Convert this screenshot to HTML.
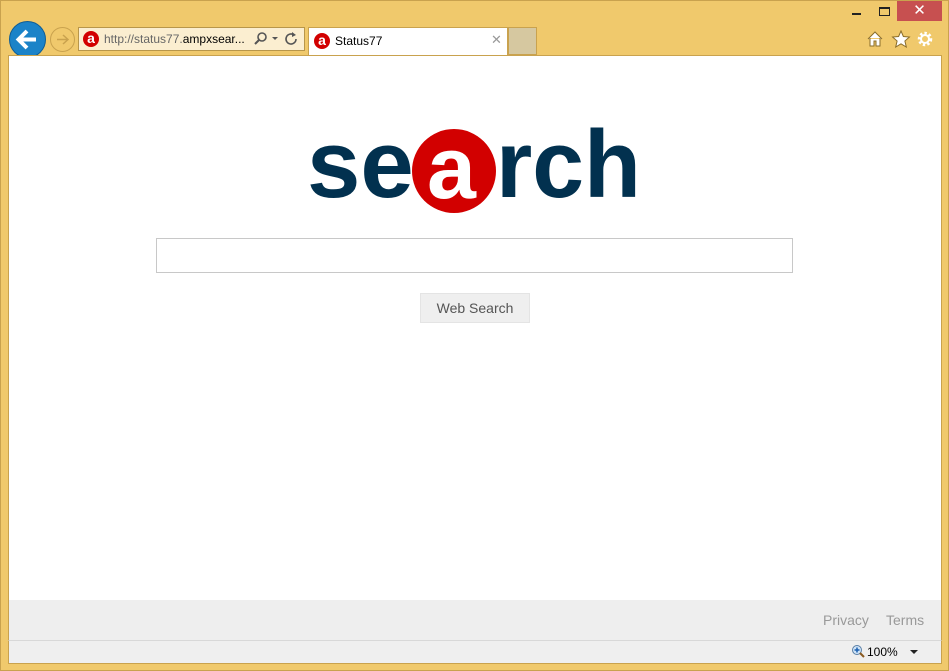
<!DOCTYPE html>
<html><head><meta charset="utf-8"><style>
*{margin:0;padding:0;box-sizing:border-box}
body{width:949px;height:671px;background:#f0c96c;position:relative;overflow:hidden;font-family:"Liberation Sans",Arial,sans-serif}
.abs{position:absolute}
.lg{position:absolute;top:100px;font:bold 96px/130px 'Liberation Sans',sans-serif;color:#02314f;white-space:nowrap}
</style></head><body>
<div class="abs" style="left:0;top:0;width:949px;height:671px;border:1px solid #c9a24e"></div>
<!-- window controls -->
<div class="abs" style="left:852px;top:13px;width:9px;height:2px;background:#222"></div>
<div class="abs" style="left:879px;top:7px;width:11px;height:9px;border:1px solid #222;border-top-width:2px"></div>
<div class="abs" style="left:897px;top:1px;width:45px;height:20px;background:#c75050;color:#fff;font-size:15px;text-align:center;line-height:20px">✕</div>
<!-- nav buttons -->
<div class="abs" style="left:9px;top:21px;width:37px;height:37px;border-radius:50%;background:#1b83c8;border:1px solid #0f5d95"></div>
<svg class="abs" style="left:9px;top:21px" width="37" height="37"><path d="M10 18.5h17M18 10l-8.5 8.5L18 27" stroke="#fff" stroke-width="4" fill="none"/></svg>
<div class="abs" style="left:50px;top:27px;width:25px;height:25px;border-radius:50%;border:1px solid #c9a24e"></div>
<svg class="abs" style="left:50px;top:27px" width="25" height="25"><path d="M7 12.5h11M13 8l5 4.5-5 4.5" stroke="#c9a24e" stroke-width="1.5" fill="none"/></svg>
<!-- address bar -->
<div class="abs" style="left:78px;top:27px;width:227px;height:24px;background:#fbeed0;border:1px solid #b8964a"></div>
<div class="abs" style="left:83px;top:31px;width:16px;height:16px;border-radius:50%;background:#d20000;color:#fff;font:bold 14px/14px 'Liberation Sans';text-align:center">a</div>
<div class="abs" style="left:104px;top:32px;font-size:12px;color:#666">http://status77.<span style="color:#000">ampxsear...</span></div>
<svg class="abs" style="left:253px;top:31px" width="50" height="16"><circle cx="9" cy="6" r="4" stroke="#555" stroke-width="1.6" fill="none"/><path d="M6 9l-4 4" stroke="#555" stroke-width="2"/><path d="M19 6h6l-3 3z" fill="#555"/><path d="M41 4a5 5 0 1 0 2 4" stroke="#555" stroke-width="1.6" fill="none"/><path d="M39 1l4 3-4 2z" fill="#555"/></svg>
<!-- tab -->
<div class="abs" style="left:308px;top:27px;width:200px;height:28px;background:#fff;border:1px solid #c9a24e;border-bottom:none"></div>
<div class="abs" style="left:314px;top:33px;width:16px;height:16px;border-radius:50%;background:#d20000;color:#fff;font:bold 14px/14px 'Liberation Sans';text-align:center">a</div>
<div class="abs" style="left:335px;top:34px;font-size:12px;color:#000">Status77</div>
<div class="abs" style="left:491px;top:32px;font-size:13px;color:#999">✕</div>
<div class="abs" style="left:508px;top:27px;width:29px;height:28px;background:#d6c8a0;border:1px solid #c9a24e"></div>
<!-- right icons -->
<svg class="abs" style="left:866px;top:30px" width="70" height="18"><path d="M2 9l7-7 7 7M4 8v8h4v-5h2v5h4V8" stroke="#8a6d2a" stroke-width="1" fill="#fff"/><path d="M35 1l2.4 5.5 6 .5-4.5 4 1.4 6-5.3-3.2-5.3 3.2 1.4-6-4.5-4 6-.5z" fill="#fff" stroke="#8a6d2a"/><circle cx="59" cy="9" r="5.5" fill="none" stroke="#fff" stroke-width="3.5" stroke-dasharray="2.2 2"/><circle cx="59" cy="9" r="4" fill="none" stroke="#fff" stroke-width="2"/></svg>
<!-- content -->
<div class="abs" style="left:8px;top:55px;width:934px;height:545px;background:#fff;border:1px solid #c9a24e;border-bottom:none"></div>
<div class="abs" style="left:412px;top:129px;width:84px;height:84px;border-radius:50%;background:#d20000"></div>
<div class="lg" style="left:307px">se</div>
<div class="lg" style="left:427px;color:#fff;font-size:88px;top:103px">a</div>
<div class="lg" style="left:496px;transform:scaleX(0.97);transform-origin:left">rch</div>
<div class="abs" style="left:156px;top:238px;width:637px;height:35px;border:1px solid #c8c8c8"></div>
<div class="abs" style="left:420px;top:293px;width:110px;height:30px;background:#efefef;border:1px solid #e4e4e4;color:#555;font-size:14px;line-height:28px;text-align:center">Web Search</div>
<div class="abs" style="left:8px;top:600px;width:934px;height:40px;background:#eeeeee;border-left:1px solid #c9a24e;border-right:1px solid #c9a24e"></div>
<div class="abs" style="left:823px;top:612px;font-size:14px;color:#999">Privacy</div>
<div class="abs" style="left:886px;top:612px;font-size:14px;color:#999">Terms</div>
<div class="abs" style="left:8px;top:640px;width:934px;height:24px;background:#efefef;border-top:1px solid #d8d8d8;border-left:1px solid #c9a24e;border-right:1px solid #c9a24e;border-bottom:1px solid #c9a24e"></div>
<svg class="abs" style="left:851px;top:644px" width="14" height="15"><circle cx="6" cy="6" r="4.5" fill="#cfe3f6" stroke="#5a7fa6"/><path d="M6 3.5v5M3.5 6h5" stroke="#1a5fb0" stroke-width="1.5"/><path d="M9 9l4 4" stroke="#8a5a20" stroke-width="2"/></svg>
<div class="abs" style="left:867px;top:645px;font-size:12px;color:#000">100%</div>
<div class="abs" style="left:910px;top:650px;border:4px solid transparent;border-top:4px solid #222"></div>
</body></html>
